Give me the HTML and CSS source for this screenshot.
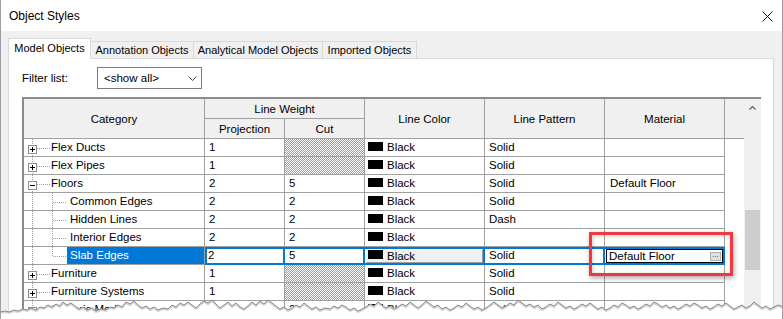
FILE: index.html
```html
<!DOCTYPE html>
<html lang="en">
<head>
    <meta charset="UTF-8">
    <title>Object Styles</title>
    <link rel="stylesheet" href="styles.css">
</head>
<body>
<div class="dialog">
    <div class="titlebar">
        <span class="title">Object Styles</span>
        <svg class="close" width="11" height="11" viewBox="0 0 11 11">
            <path d="M0.5 0.5L10.5 10.5M10.5 0.5L0.5 10.5" stroke="#111" stroke-width="1" fill="none"/>
        </svg>
    </div>
    <div class="content">
        <div class="tabs">
            <div class="tab active tab-model">Model Objects</div>
            <div class="tab tab-annot">Annotation Objects</div>
            <div class="tab tab-analyt">Analytical Model Objects</div>
            <div class="tab tab-import">Imported Objects</div>
        </div>
        <div class="panel">
            <div class="filter">
                <span class="filter-label">Filter list:</span>
                <div class="select">
                    <span>&lt;show all&gt;</span>
                    <svg width="9" height="5" viewBox="0 0 9 5">
                        <path d="M0.5 0.5L4.5 4.5L8.5 0.5" stroke="#444" fill="none"/>
                    </svg>
                </div>
            </div>
            <div class="grid">
                <div class="sheet">
                    <div class="head">
                        <div class="h-span">Category</div>
                        <div class="h-wide">Line Weight</div>
                        <div class="h-span">Line Color</div>
                        <div class="h-span">Line Pattern</div>
                        <div class="h-span">Material</div>
                        <div class="h-span h-end"></div>
                        <div>Projection</div>
                        <div>Cut</div>
                    </div>

                    <div class="row">
                        <div class="cell cat"><span class="toggle plus"></span><span class="branch"></span><span class="label">Flex Ducts</span></div>
                        <div class="cell">1</div>
                        <div class="cell hatch"></div>
                        <div class="cell color"><span class="swatch"></span>Black</div>
                        <div class="cell">Solid</div>
                        <div class="cell"></div>
                        <div class="end"></div>
                    </div>
                    <div class="row">
                        <div class="cell cat"><span class="toggle plus"></span><span class="branch"></span><span class="label">Flex Pipes</span></div>
                        <div class="cell">1</div>
                        <div class="cell hatch"></div>
                        <div class="cell color"><span class="swatch"></span>Black</div>
                        <div class="cell">Solid</div>
                        <div class="cell"></div>
                        <div class="end"></div>
                    </div>
                    <div class="row">
                        <div class="cell cat"><span class="toggle"></span><span class="branch"></span><span class="label">Floors</span></div>
                        <div class="cell">2</div>
                        <div class="cell">5</div>
                        <div class="cell color"><span class="swatch"></span>Black</div>
                        <div class="cell">Solid</div>
                        <div class="cell material">Default Floor</div>
                        <div class="end"></div>
                    </div>
                    <div class="row">
                        <div class="cell cat sub"><span class="branch long"></span><span class="label">Common Edges</span></div>
                        <div class="cell">2</div>
                        <div class="cell">2</div>
                        <div class="cell color"><span class="swatch"></span>Black</div>
                        <div class="cell">Solid</div>
                        <div class="cell"></div>
                        <div class="end"></div>
                    </div>
                    <div class="row">
                        <div class="cell cat sub"><span class="branch long"></span><span class="label">Hidden Lines</span></div>
                        <div class="cell">2</div>
                        <div class="cell">2</div>
                        <div class="cell color"><span class="swatch"></span>Black</div>
                        <div class="cell">Dash</div>
                        <div class="cell"></div>
                        <div class="end"></div>
                    </div>
                    <div class="row">
                        <div class="cell cat sub"><span class="branch long"></span><span class="label">Interior Edges</span></div>
                        <div class="cell">2</div>
                        <div class="cell">2</div>
                        <div class="cell color"><span class="swatch"></span>Black</div>
                        <div class="cell"></div>
                        <div class="cell"></div>
                        <div class="end"></div>
                    </div>
                    <div class="row sel">
                        <div class="cell cat sub last"><span class="branch long"></span><span class="label selected">Slab Edges</span></div>
                        <div class="cell val first">2</div>
                        <div class="cell val">5</div>
                        <div class="cell val color-edit">
                            <div class="color-btn"><span class="swatch"></span>Black</div>
                        </div>
                        <div class="cell val">Solid</div>
                        <div class="cell val material-edit">
                            <div class="textbox"><span>Default Floor</span><span class="dots">...</span></div>
                            <div class="callout"></div>
                        </div>
                        <div class="end"></div>
                    </div>
                    <div class="row">
                        <div class="cell cat"><span class="toggle plus"></span><span class="branch"></span><span class="label">Furniture</span></div>
                        <div class="cell">1</div>
                        <div class="cell hatch"></div>
                        <div class="cell color"><span class="swatch"></span>Black</div>
                        <div class="cell">Solid</div>
                        <div class="cell"></div>
                        <div class="end"></div>
                    </div>
                    <div class="row">
                        <div class="cell cat"><span class="toggle plus"></span><span class="branch"></span><span class="label">Furniture Systems</span></div>
                        <div class="cell">1</div>
                        <div class="cell hatch"></div>
                        <div class="cell color"><span class="swatch"></span>Black</div>
                        <div class="cell">Solid</div>
                        <div class="cell"></div>
                        <div class="end"></div>
                    </div>
                    <div class="row">
                        <div class="cell cat"><span class="toggle plus"></span><span class="branch"></span><span class="label">Generic Models</span></div>
                        <div class="cell">1</div>
                        <div class="cell">2</div>
                        <div class="cell color"><span class="swatch"></span>Black</div>
                        <div class="cell">Solid</div>
                        <div class="cell"></div>
                        <div class="end"></div>
                    </div>
                </div>
                <div class="scrollbar">
                    <svg class="scroll-up" width="7" height="4" viewBox="0 0 7 4">
                        <path d="M0.5 3.5L3.5 0.5L6.5 3.5" stroke="#606060" stroke-width="1.2" fill="none"/>
                    </svg>
                    <div class="thumb"></div>
                </div>
            </div>
        </div>
    </div>

    <!-- torn paper edge of the screenshot -->
    <svg class="torn" width="784" height="26" viewBox="0 0 784 26">
        <polygon fill="#fff" points="0,19 5,18 9,19 14,17 18,18 23,16 27,17 31,15 36,17 40,14 44,15 48,12 52,14 56,11 60,13 63,9 67,12 71,10 75,13 79,16 83,14 87,17 92,15 96,18 101,16 106,17 110,14 114,15 118,12 122,14 126,9 130,11 134,8 138,12 142,15 146,13 150,16 154,14 158,17 163,15 168,16 172,12 176,14 180,10 184,12 188,9 192,12 196,15 200,11 204,8 208,10 212,7 216,11 220,15 224,12 228,9 232,13 236,10 240,14 244,16 248,13 252,9 256,12 260,8 264,11 268,7 272,10 276,13 280,16 284,14 288,17 292,15 296,12 300,14 304,10 308,13 312,16 316,14 320,17 325,15 330,16 334,13 338,15 342,12 346,14 350,17 354,15 358,18 362,16 366,14 370,11 374,13 378,9 382,12 386,15 390,13 394,16 398,14 402,11 406,13 410,9 414,12 418,15 422,12 426,8 430,11 434,14 438,12 442,16 446,14 450,17 454,15 458,12 462,14 466,10 470,13 474,16 478,14 482,17 486,15 490,12 494,9 498,12 502,15 506,13 510,10 514,12 518,7 522,10 526,13 530,11 534,14 538,12 542,16 546,14 550,11 554,13 558,9 562,12 566,15 570,13 574,16 578,14 582,11 586,13 590,10 594,13 598,16 602,14 606,17 610,15 614,12 618,14 622,10 626,12 630,15 634,13 638,16 642,14 646,11 650,13 654,9 658,11 662,14 666,12 670,15 674,13 678,16 682,14 686,11 690,13 694,10 698,12 702,15 706,13 710,16 714,14 718,11 722,13 726,10 730,13 734,16 738,14 742,12 746,15 750,13 754,9 758,12 762,15 766,13 770,16 774,14 778,12 784,14 784,26 0,26"/>
        <polyline class="tear-shadow" fill="none" points="0,19 5,18 9,19 14,17 18,18 23,16 27,17 31,15 36,17 40,14 44,15 48,12 52,14 56,11 60,13 63,9 67,12 71,10 75,13 79,16 83,14 87,17 92,15 96,18 101,16 106,17 110,14 114,15 118,12 122,14 126,9 130,11 134,8 138,12 142,15 146,13 150,16 154,14 158,17 163,15 168,16 172,12 176,14 180,10 184,12 188,9 192,12 196,15 200,11 204,8 208,10 212,7 216,11 220,15 224,12 228,9 232,13 236,10 240,14 244,16 248,13 252,9 256,12 260,8 264,11 268,7 272,10 276,13 280,16 284,14 288,17 292,15 296,12 300,14 304,10 308,13 312,16 316,14 320,17 325,15 330,16 334,13 338,15 342,12 346,14 350,17 354,15 358,18 362,16 366,14 370,11 374,13 378,9 382,12 386,15 390,13 394,16 398,14 402,11 406,13 410,9 414,12 418,15 422,12 426,8 430,11 434,14 438,12 442,16 446,14 450,17 454,15 458,12 462,14 466,10 470,13 474,16 478,14 482,17 486,15 490,12 494,9 498,12 502,15 506,13 510,10 514,12 518,7 522,10 526,13 530,11 534,14 538,12 542,16 546,14 550,11 554,13 558,9 562,12 566,15 570,13 574,16 578,14 582,11 586,13 590,10 594,13 598,16 602,14 606,17 610,15 614,12 618,14 622,10 626,12 630,15 634,13 638,16 642,14 646,11 650,13 654,9 658,11 662,14 666,12 670,15 674,13 678,16 682,14 686,11 690,13 694,10 698,12 702,15 706,13 710,16 714,14 718,11 722,13 726,10 730,13 734,16 738,14 742,12 746,15 750,13 754,9 758,12 762,15 766,13 770,16 774,14 778,12 784,14"/>
        <polyline class="tear-line" fill="none" points="0,19 5,18 9,19 14,17 18,18 23,16 27,17 31,15 36,17 40,14 44,15 48,12 52,14 56,11 60,13 63,9 67,12 71,10 75,13 79,16 83,14 87,17 92,15 96,18 101,16 106,17 110,14 114,15 118,12 122,14 126,9 130,11 134,8 138,12 142,15 146,13 150,16 154,14 158,17 163,15 168,16 172,12 176,14 180,10 184,12 188,9 192,12 196,15 200,11 204,8 208,10 212,7 216,11 220,15 224,12 228,9 232,13 236,10 240,14 244,16 248,13 252,9 256,12 260,8 264,11 268,7 272,10 276,13 280,16 284,14 288,17 292,15 296,12 300,14 304,10 308,13 312,16 316,14 320,17 325,15 330,16 334,13 338,15 342,12 346,14 350,17 354,15 358,18 362,16 366,14 370,11 374,13 378,9 382,12 386,15 390,13 394,16 398,14 402,11 406,13 410,9 414,12 418,15 422,12 426,8 430,11 434,14 438,12 442,16 446,14 450,17 454,15 458,12 462,14 466,10 470,13 474,16 478,14 482,17 486,15 490,12 494,9 498,12 502,15 506,13 510,10 514,12 518,7 522,10 526,13 530,11 534,14 538,12 542,16 546,14 550,11 554,13 558,9 562,12 566,15 570,13 574,16 578,14 582,11 586,13 590,10 594,13 598,16 602,14 606,17 610,15 614,12 618,14 622,10 626,12 630,15 634,13 638,16 642,14 646,11 650,13 654,9 658,11 662,14 666,12 670,15 674,13 678,16 682,14 686,11 690,13 694,10 698,12 702,15 706,13 710,16 714,14 718,11 722,13 726,10 730,13 734,16 738,14 742,12 746,15 750,13 754,9 758,12 762,15 766,13 770,16 774,14 778,12 784,14"/>
    </svg>
</div>
</body>
</html>
```

FILE: styles.css
```css
* {
    margin: 0;
    padding: 0;
    box-sizing: border-box;
}

html, body {
    width: 783px;
    height: 319px;
    overflow: hidden;
}

body {
    background: #fff;
    font-family: "Segoe UI", "Liberation Sans", Arial, sans-serif;
    font-size: 11.5px;
    color: #000;
}

.dialog {
    position: relative;
    height: 319px;
    display: flex;
    flex-direction: column;
    border-left: 1px solid #a0a0a0;
    border-right: 1px solid #a0a0a0;
    overflow: hidden;
}

/* title bar */

.titlebar {
    flex: none;
    height: 31px;
    display: flex;
    align-items: flex-start;
    justify-content: space-between;
    padding: 1px 9px 0 8px;
    background: #fff;
}

.title {
    font-size: 12px;
    line-height: 31px;
}

.close {
    margin-top: 10px;
}

/* tabs + panel */

.content {
    flex: 1;
    display: flex;
    flex-direction: column;
    min-height: 0;
    padding: 7px 8px 0 7px;
    background: #f0f0f0;
}

.tabs {
    flex: none;
    height: 20px;
    display: flex;
    align-items: flex-end;
    font-size: 11px;
}

.tab {
    height: 17px;
    margin-left: -1px;
    border: 1px solid #d9d9d9;
    border-bottom: none;
    background: #f0f0f0;
    text-align: center;
    line-height: 16px;
    white-space: nowrap;
}

.tab.active {
    position: relative;
    z-index: 1;
    height: 21px;
    margin-left: 0;
    margin-bottom: -1px;
    background: #fff;
    line-height: 18px;
}

.tab-model { width: 83px; }
.tab-annot { width: 104px; }
.tab-analyt { width: 130px; }
.tab-import { width: 95px; }

.panel {
    flex: 1;
    min-height: 0;
    display: flex;
    flex-direction: column;
    padding: 8px 12px 0 13px;
    border: 1px solid #d9d9d9;
    background: #fff;
}

.filter {
    flex: none;
    height: 22px;
    display: flex;
    align-items: center;
}

.filter-label {
    width: 75px;
}

.select {
    width: 105px;
    height: 22px;
    display: flex;
    align-items: center;
    justify-content: space-between;
    padding: 0 4px 0 6px;
    border: 1px solid #7a7a7a;
}

/* data grid */

.grid {
    flex: 1;
    min-height: 0;
    width: 739px;
    margin-top: 8px;
    display: flex;
    overflow: hidden;
    border-top: 2px solid #8c8c8c;
    border-left: 2px solid #8c8c8c;
}

.sheet {
    width: 720px;
    flex: none;
}

.head, .row {
    display: grid;
    grid-template-columns: 181px 80px 80px 120px 120px 120px 19px;
}

.head {
    grid-template-rows: 20px 20px;
    background: #f0f0f0;
}

.head div {
    display: flex;
    align-items: center;
    justify-content: center;
    border-right: 1px solid #a0a0a0;
    border-bottom: 1px solid #a0a0a0;
}

.head .h-span {
    grid-row: span 2;
}

.head .h-wide {
    grid-column: span 2;
}

.head .h-end {
    border-right: none;
}

.row {
    height: 18px;
}

.cell {
    height: 18px;
    padding: 0 4px;
    border-right: 1px solid #a0a0a0;
    border-bottom: 1px solid #a0a0a0;
    line-height: 17px;
    white-space: nowrap;
}

.hatch {
    background: repeating-conic-gradient(#9c9c9c 0 25%, #fff 0 50%) 0 0 / 2px 2px;
}

.material {
    padding-left: 5px;
}

.color {
    display: flex;
    align-items: flex-start;
    padding-left: 3px;
}

.swatch {
    flex: none;
    width: 15px;
    height: 9px;
    margin: 3px 4px 0 0;
    background: #000;
}

/* tree column */

.cat {
    display: flex;
    align-items: flex-start;
    padding: 0 0 0 4px;
    background: repeating-linear-gradient(#a0a0a0 0 1px, transparent 1px 2px) 8px 0 / 1px 100% no-repeat;
}

.cat.sub {
    padding-left: 29px;
    background:
        repeating-linear-gradient(#a0a0a0 0 1px, transparent 1px 2px) 8px 0 / 1px 100% no-repeat,
        repeating-linear-gradient(#a0a0a0 0 1px, transparent 1px 2px) 28px 0 / 1px 100% no-repeat;
}

.cat.sub.last {
    background:
        repeating-linear-gradient(#a0a0a0 0 1px, transparent 1px 2px) 8px 0 / 1px 100% no-repeat,
        repeating-linear-gradient(#a0a0a0 0 1px, transparent 1px 2px) 28px 0 / 1px 10px no-repeat;
}

.toggle {
    flex: none;
    width: 9px;
    height: 9px;
    margin-top: 6px;
    border: 1px solid #8e8f8f;
    background: linear-gradient(#000, #000) center / 5px 1px no-repeat, #fff;
}

.toggle.plus {
    background:
        linear-gradient(#000, #000) center / 5px 1px no-repeat,
        linear-gradient(#000, #000) center / 1px 5px no-repeat,
        #fff;
}

.branch {
    flex: none;
    width: 13px;
    height: 1px;
    margin-top: 9px;
    background: repeating-linear-gradient(to right, #a0a0a0 0 1px, transparent 1px 2px);
}

.branch.long {
    width: 14px;
}

.label {
    padding-left: 1px;
}

.sub .label {
    flex: 1;
    height: 17px;
    padding-left: 3px;
}

.label.selected {
    background: #0078d7;
    color: #fff;
}

/* selected row editors */

.row.sel .val {
    border-right-color: #0078d7;
    border-bottom-color: #0078d7;
    box-shadow: inset 0 2px 0 #0078d7, inset -1px -1px 0 #0078d7;
}

.row.sel .val.first {
    box-shadow: inset 0 2px 0 #0078d7, inset -1px -1px 0 #0078d7, inset 2px 0 0 #0078d7;
    padding-left: 3px;
}

.color-edit, .material-edit {
    display: flex;
    padding: 0;
}

.color-btn {
    flex: 1;
    display: flex;
    align-items: flex-start;
    margin: 2px 1px 1px 1px;
    padding: 0 0 0 1px;
    border: 1px solid;
    border-color: #fff #a0a0a0 #a0a0a0 #fff;
    background: #f0f0f0;
    line-height: 12px;
}

.color-btn .swatch {
    margin: 0 4px 0 0;
}

.material-edit {
    position: relative;
}

.textbox {
    flex: 1;
    height: 14px;
    display: flex;
    justify-content: space-between;
    margin: 2px 1px 1px 1px;
    padding-left: 2px;
    border: 1px solid #000;
    background: #fff;
    line-height: 12px;
}

.dots {
    width: 11px;
    height: 9px;
    margin: 2px 1px 0 0;
    border: 1px solid #adadad;
    background: #e1e1e1;
    font-size: 8px;
    line-height: 4px;
    text-align: center;
    color: #333;
}

.callout {
    position: absolute;
    left: -16px;
    top: -15px;
    width: 144px;
    height: 44px;
    border: 3px solid #ec3a3e;
    box-shadow: 1px 2px 5px rgba(0, 0, 0, .35), inset 1px 1px 4px rgba(0, 0, 0, .2);
}

/* scrollbar */

.scrollbar {
    flex: none;
    width: 17px;
    display: flex;
    flex-direction: column;
    align-items: center;
    background: #f0f0f0;
}

.scroll-up {
    margin-top: 7px;
}

.thumb {
    width: 15px;
    height: 60px;
    margin-top: 100px;
    background: #cdcdcd;
}

/* torn edge */

.torn {
    position: absolute;
    left: -1px;
    bottom: 0;
}

.tear-shadow {
    stroke: #d4d4d4;
    stroke-width: 2;
    transform: translateY(1px);
}

.tear-line {
    stroke: #8a8a8a;
    stroke-width: 1;
}
```
